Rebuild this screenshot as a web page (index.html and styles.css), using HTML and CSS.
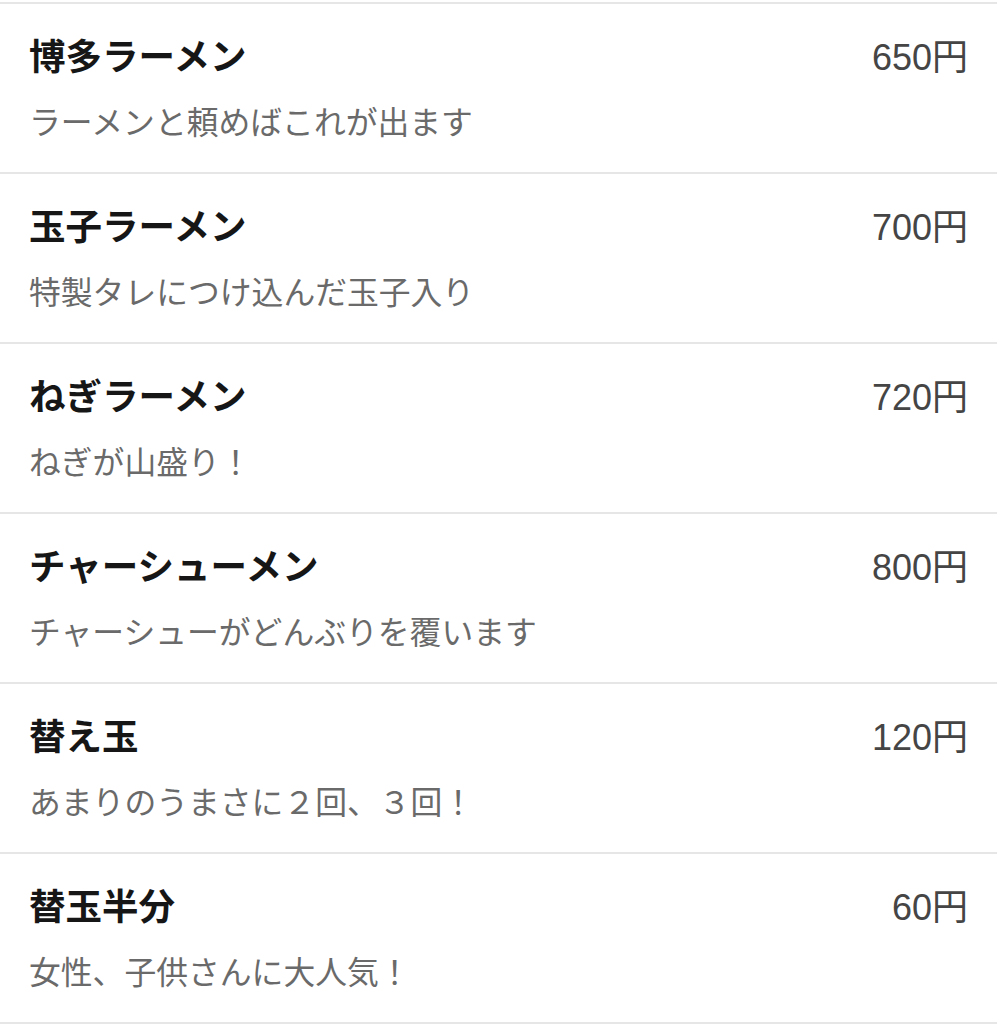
FILE: index.html
```html
<!DOCTYPE html>
<html lang="ja">
<head>
	<meta charset="utf-8">
	<title>メニュー</title>
	<link rel="stylesheet" href="styles.css">
</head>
<body>
	<ul class="menu">
		<li class="item">
			<div class="head"><span class="name">博多ラーメン</span><span class="price">650円</span></div>
			<p class="desc">ラーメンと頼めばこれが出ます</p>
		</li>
		<li class="item">
			<div class="head"><span class="name">玉子ラーメン</span><span class="price">700円</span></div>
			<p class="desc">特製タレにつけ込んだ玉子入り</p>
		</li>
		<li class="item">
			<div class="head"><span class="name">ねぎラーメン</span><span class="price">720円</span></div>
			<p class="desc">ねぎが山盛り！</p>
		</li>
		<li class="item">
			<div class="head"><span class="name">チャーシューメン</span><span class="price">800円</span></div>
			<p class="desc">チャーシューがどんぶりを覆います</p>
		</li>
		<li class="item">
			<div class="head"><span class="name">替え玉</span><span class="price">120円</span></div>
			<p class="desc">あまりのうまさに２回、３回！</p>
		</li>
		<li class="item">
			<div class="head"><span class="name">替玉半分</span><span class="price">60円</span></div>
			<p class="desc">女性、子供さんに大人気！</p>
		</li>
	</ul>
</body>
</html>
```

FILE: styles.css
```css
body{
	margin: 0;
	background: #fff;
	font-family: "Liberation Sans", "Noto Sans CJK JP", sans-serif;
}
.menu{
	list-style: none;
	margin: 0;
	padding: 2px 0 0 0;
}
.item{
	height: 168px;
	border-top: 2px solid #e6e6e6;
	padding: 0 29px 0 29px;
}
.item:last-child{
	border-bottom: 2px solid #e6e6e6;
}
.head{
	display: flex;
	justify-content: space-between;
	align-items: baseline;
	padding-top: 29px;
	height: 44px;
}
.name{
	font-family: "Noto Sans CJK JP", sans-serif;
	font-size: 36.5px;
	line-height: 44px;
	font-weight: bold;
	color: #161616;
}
.price{
	font-size: 36px;
	line-height: 44px;
	color: #454545;
}
.desc{
	margin: 23px 0 0;
	font-family: "Noto Sans CJK JP", sans-serif;
	font-size: 31.8px;
	line-height: 40px;
	color: #6a6a6a;
}
```
